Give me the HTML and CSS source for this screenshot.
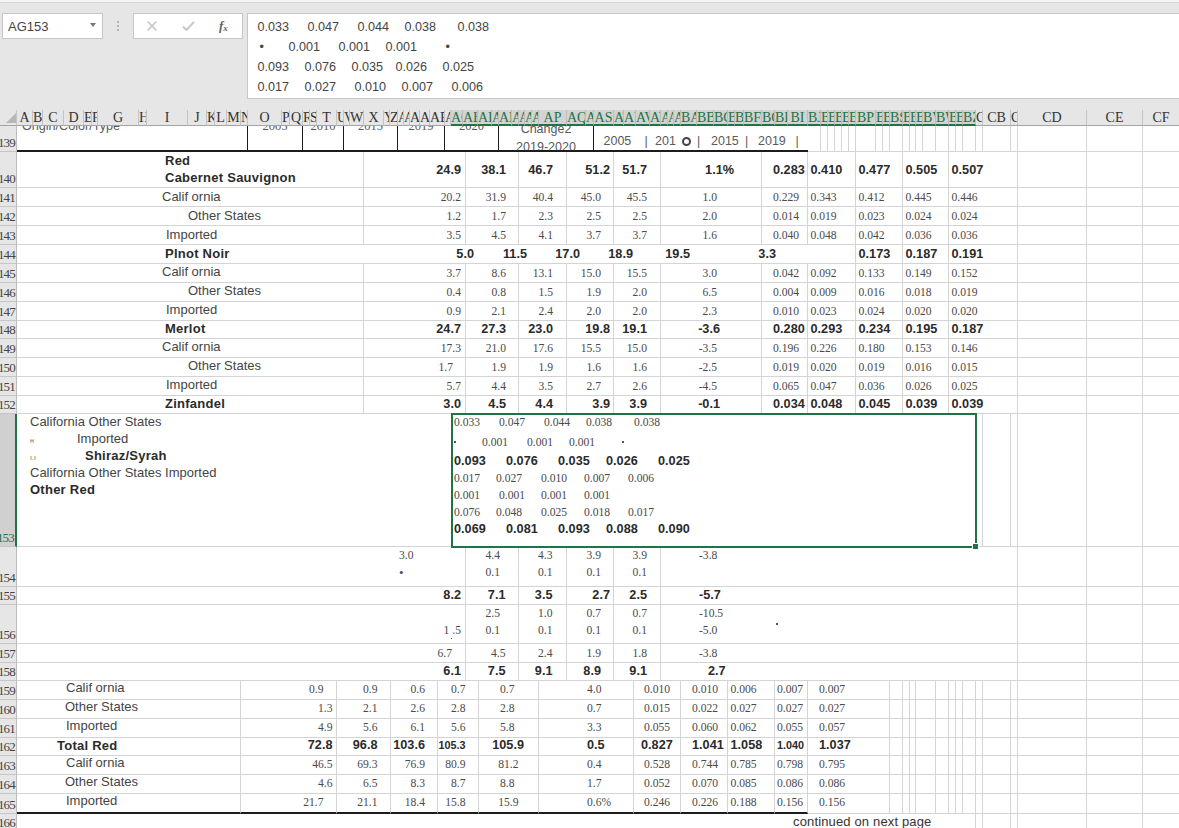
FILE: index.html
```html
<!DOCTYPE html>
<html lang="en">
<head>
<meta charset="utf-8">
<title>Sheet</title>
<link rel="stylesheet" href="styles.css">
</head>
<body>
<div class="app">
  <div class="topstrip"></div>
  <div class="fbar">
    <div class="namebox"><span>AG153</span><i class="caret"></i></div>
    <div class="grip"><i></i><i></i><i></i></div>
    <div class="btns">
      <svg class="ic-x" width="10" height="10" viewBox="0 0 10 10"><path d="M.7.7l8.6 8.6M9.3.7L.7 9.3" fill="none" stroke="#c9c9c9" stroke-width="1.7"/></svg>
      <svg class="ic-ok" width="13" height="10" viewBox="0 0 13 10"><path d="M1 5.5l3.5 3.5L12 .8" fill="none" stroke="#c9c9c9" stroke-width="2"/></svg>
      <span class="fx">f<sub>x</sub></span>
    </div>
    <div class="ftext">
      <div class="fl fl1"><span>0.033</span><span>0.047</span><span>0.044</span><span>0.038</span><span>0.038</span></div>
      <div class="fl fl2"><span>•</span><span>0.001</span><span>0.001</span><span>0.001</span><span>•</span></div>
      <div class="fl fl3"><span>0.093</span><span>0.076</span><span>0.035</span><span>0.026</span><span>0.025</span></div>
      <div class="fl fl4"><span>0.017</span><span>0.027</span><span>0.010</span><span>0.007</span><span>0.006</span></div>
    </div>
  </div>

  <div class="col-head">
    <div class="corner"><i></i></div>
    <div>A</div><div>B</div><div>C</div><div>D</div><div>E</div><div>F</div><div>G</div><div>H</div><div>I</div><div>J</div><div>K</div><div>L</div><div>M</div><div>N</div><div>O</div><div>P</div><div>Q</div><div>R</div><div>S</div><div>T</div><div>U</div><div>V</div><div>W</div><div>X</div><div>Y</div><div>Z</div>
    <div>AA</div><div>AB</div><div>AC</div><div>AD</div><div>AE</div><div>AF</div><div>AG</div><div>AH</div><div>AI</div><div>AJ</div><div>AK</div><div>AL</div><div>AM</div><div>AN</div><div>AO</div><div>AP</div><div>AQ</div><div>AR</div><div>AS</div><div>AT</div><div>AU</div><div>AV</div><div>AW</div><div>AX</div><div>AY</div><div>AZ</div>
    <div>BA</div><div>BB</div><div>BC</div><div>BD</div><div>BE</div><div>BF</div><div>BG</div><div>BH</div><div>BI</div><div>BJ</div><div>BK</div><div>BL</div><div>BM</div><div>BN</div><div>BO</div><div>BP</div><div>BQ</div><div>BR</div><div>BS</div><div>BT</div><div>BU</div><div>BV</div><div>BV</div><div>BW</div><div>BX</div><div>BY</div><div>BZ</div>
    <div>CA</div><div>CB</div><div>CC</div><div>CD</div><div>CE</div><div>CF</div>
  </div>

  <div class="row thead">
    <div class="rh">139</div>
    <div class="c hc hl"><span class="clip">Origin/Color/Type</span></div>
    <div class="c hc"><span class="clip s">2005</span></div>
    <div class="c hc"><span class="clip s">2010</span></div>
    <div class="c hc"><span class="clip s">2015</span></div>
    <div class="c hc"><span class="clip s">2019</span></div>
    <div class="c hc"><span class="clip s">2020</span></div>
    <div class="c hc chg"><span>Change2</span><span>2019-2020</span></div>
    <div class="c hb yrs"><span>2005</span><span>|</span><span>201</span><span><i class="ring"></i></span><span>|</span><span>2015</span><span>|</span><span>2019</span><span>|</span></div>
    <div class="c"></div><div class="c"></div><div class="c"></div><div class="c"></div><div class="c"></div>
    <div class="c"></div><div class="c"></div><div class="c"></div><div class="c"></div><div class="c"></div>
    <div class="c"></div><div class="c"></div><div class="c"></div><div class="c"></div><div class="c"></div>
    <div class="c"></div><div class="c"></div><div class="c"></div><div class="c"></div><div class="c"></div>
    <div class="c"></div><div class="c"></div><div class="c"></div><div class="c nr"></div>
  </div>

  <div class="row main bd h36"><div class="rh">140</div><div class="c tl two"><span>Red</span><span>Cabernet Sauvignon</span></div><div class="c">24.9</div><div class="c">38.1</div><div class="c">46.7</div><div class="c">51.2</div><div class="c">51.7</div><div class="c pct">1.1%</div><div class="c">0.283</div><div class="c">0.410</div><div class="c">0.477</div><div class="c">0.505</div><div class="c">0.507</div><div class="c"></div><div class="c"></div><div class="c nr"></div></div>
  <div class="row main h19"><div class="rh">141</div><div class="c tl ca">Calif ornia</div><div class="c">20.2</div><div class="c">31.9</div><div class="c">40.4</div><div class="c">45.0</div><div class="c">45.5</div><div class="c">1.0</div><div class="c">0.229</div><div class="c">0.343</div><div class="c">0.412</div><div class="c">0.445</div><div class="c">0.446</div><div class="c"></div><div class="c"></div><div class="c nr"></div></div>
  <div class="row main h19"><div class="rh">142</div><div class="c tl os">Other States</div><div class="c">1.2</div><div class="c">1.7</div><div class="c">2.3</div><div class="c">2.5</div><div class="c">2.5</div><div class="c">2.0</div><div class="c">0.014</div><div class="c">0.019</div><div class="c">0.023</div><div class="c">0.024</div><div class="c">0.024</div><div class="c"></div><div class="c"></div><div class="c nr"></div></div>
  <div class="row main h19"><div class="rh">143</div><div class="c tl im">Imported</div><div class="c">3.5</div><div class="c">4.5</div><div class="c">4.1</div><div class="c">3.7</div><div class="c">3.7</div><div class="c">1.6</div><div class="c">0.040</div><div class="c">0.048</div><div class="c">0.042</div><div class="c">0.036</div><div class="c">0.036</div><div class="c"></div><div class="c"></div><div class="c nr"></div></div>
  <div class="row pinot bd h19"><div class="rh">144</div><div class="c nb tl0"><span class="pn">Plnot Noir</span><span>5.0</span></div><div class="c nb">11.5</div><div class="c nb">17.0</div><div class="c nb">18.9</div><div class="c nb">19.5</div><div class="c nb">3.3</div><div class="c"></div><div class="c">0.173</div><div class="c">0.187</div><div class="c">0.191</div><div class="c"></div><div class="c"></div><div class="c nr"></div></div>
  <div class="row main h19"><div class="rh">145</div><div class="c tl ca">Calif ornia</div><div class="c">3.7</div><div class="c">8.6</div><div class="c">13.1</div><div class="c">15.0</div><div class="c">15.5</div><div class="c">3.0</div><div class="c">0.042</div><div class="c">0.092</div><div class="c">0.133</div><div class="c">0.149</div><div class="c">0.152</div><div class="c"></div><div class="c"></div><div class="c nr"></div></div>
  <div class="row main h19"><div class="rh">146</div><div class="c tl os">Other States</div><div class="c">0.4</div><div class="c">0.8</div><div class="c">1.5</div><div class="c">1.9</div><div class="c">2.0</div><div class="c">6.5</div><div class="c">0.004</div><div class="c">0.009</div><div class="c">0.016</div><div class="c">0.018</div><div class="c">0.019</div><div class="c"></div><div class="c"></div><div class="c nr"></div></div>
  <div class="row main h19"><div class="rh">147</div><div class="c tl im">Imported</div><div class="c">0.9</div><div class="c">2.1</div><div class="c">2.4</div><div class="c">2.0</div><div class="c">2.0</div><div class="c">2.3</div><div class="c">0.010</div><div class="c">0.023</div><div class="c">0.024</div><div class="c">0.020</div><div class="c">0.020</div><div class="c"></div><div class="c"></div><div class="c nr"></div></div>
  <div class="row main bd h18"><div class="rh">148</div><div class="c tl bl">Merlot</div><div class="c">24.7</div><div class="c">27.3</div><div class="c">23.0</div><div class="c">19.8</div><div class="c">19.1</div><div class="c">-3.6</div><div class="c">0.280</div><div class="c">0.293</div><div class="c">0.234</div><div class="c">0.195</div><div class="c">0.187</div><div class="c"></div><div class="c"></div><div class="c nr"></div></div>
  <div class="row main h19"><div class="rh">149</div><div class="c tl ca">Calif ornia</div><div class="c">17.3</div><div class="c">21.0</div><div class="c">17.6</div><div class="c">15.5</div><div class="c">15.0</div><div class="c">-3.5</div><div class="c">0.196</div><div class="c">0.226</div><div class="c">0.180</div><div class="c">0.153</div><div class="c">0.146</div><div class="c"></div><div class="c"></div><div class="c nr"></div></div>
  <div class="row main h19"><div class="rh">150</div><div class="c tl os">Other States</div><div class="c in">1.7</div><div class="c">1.9</div><div class="c">1.9</div><div class="c">1.6</div><div class="c">1.6</div><div class="c">-2.5</div><div class="c">0.019</div><div class="c">0.020</div><div class="c">0.019</div><div class="c">0.016</div><div class="c">0.015</div><div class="c"></div><div class="c"></div><div class="c nr"></div></div>
  <div class="row main h19"><div class="rh">151</div><div class="c tl im">Imported</div><div class="c">5.7</div><div class="c">4.4</div><div class="c">3.5</div><div class="c">2.7</div><div class="c">2.6</div><div class="c">-4.5</div><div class="c">0.065</div><div class="c">0.047</div><div class="c">0.036</div><div class="c">0.026</div><div class="c">0.025</div><div class="c"></div><div class="c"></div><div class="c nr"></div></div>
  <div class="row main bd h18"><div class="rh">152</div><div class="c tl bl">Zinfandel</div><div class="c">3.0</div><div class="c">4.5</div><div class="c">4.4</div><div class="c">3.9</div><div class="c">3.9</div><div class="c">-0.1</div><div class="c">0.034</div><div class="c">0.048</div><div class="c">0.045</div><div class="c">0.039</div><div class="c">0.039</div><div class="c"></div><div class="c"></div><div class="c nr"></div></div>

  <div class="row active h133">
    <div class="rh on">153</div>
    <div class="c note">
      <span>California Other States</span>
      <span><small class="mk m1">н</small>Imported</span>
      <span class="b"><small class="mk m2">ı.ı</small>Shiraz/Syrah</span>
      <span>California Other States Imported</span>
      <span class="b">Other Red</span>
    </div>
    <div class="c selcell">
      <div class="sl sl1"><span>0.033</span><span>0.047</span><span>0.044</span><span>0.038</span><span>0.038</span></div>
      <div class="sl sl2"><i class="tick up"></i><span>0.001</span><span>0.001</span><span>0.001</span><i class="tick up"></i></div>
      <div class="sl sl3 b"><span>0.093</span><span>0.076</span><span>0.035</span><span>0.026</span><span>0.025</span></div>
      <div class="sl sl4"><span>0.017</span><span>0.027</span><span>0.010</span><span>0.007</span><span>0.006</span></div>
      <div class="sl sl5"><span>0.001</span><span>0.001</span><span>0.001</span><span>0.001</span></div>
      <div class="sl sl4"><span>0.076</span><span>0.048</span><span>0.025</span><span>0.018</span><span>0.017</span></div>
      <div class="sl sl3 b"><span>0.069</span><span>0.081</span><span>0.093</span><span>0.088</span><span>0.090</span></div>
      <div class="frame"><i class="handle"></i></div>
    </div>
    <div class="c"></div><div class="c"></div><div class="c"></div><div class="c"></div><div class="c"></div><div class="c nr"></div>
  </div>

  <div class="row low h40"><div class="rh">154</div><div class="c st far"><span>3.0</span><span class="pt">•</span></div><div class="c st in2"><span>4.4</span><span>0.1</span></div><div class="c st"><span>4.3</span><span>0.1</span></div><div class="c st"><span>3.9</span><span>0.1</span></div><div class="c st"><span>3.9</span><span>0.1</span></div><div class="c wide st"><span>-3.8</span></div><div class="c"></div><div class="c"></div><div class="c nr"></div></div>
  <div class="row low bd h18"><div class="rh">155</div><div class="c">8.2</div><div class="c">7.1</div><div class="c">3.5</div><div class="c tight">2.7</div><div class="c">2.5</div><div class="c wide">-5.7</div><div class="c"></div><div class="c"></div><div class="c nr"></div></div>
  <div class="row low h39"><div class="rh">156</div><div class="c st"><span>&nbsp;</span><span class="under">1 .5</span></div><div class="c st in2"><span>2.5</span><span>0.1</span></div><div class="c st"><span>1.0</span><span>0.1</span></div><div class="c st"><span>0.7</span><span>0.1</span></div><div class="c st"><span>0.7</span><span>0.1</span></div><div class="c wide"><div class="st2"><span>-10.5</span><span>-5.0</span></div><i class="tick rightdot"></i></div><div class="c"></div><div class="c"></div><div class="c nr"></div></div>
  <div class="row low h19"><div class="rh">157</div><div class="c in">6.7</div><div class="c">4.5</div><div class="c">2.4</div><div class="c">1.9</div><div class="c">1.8</div><div class="c wide">-3.8</div><div class="c"></div><div class="c"></div><div class="c nr"></div></div>
  <div class="row low bd h18"><div class="rh">158</div><div class="c">6.1</div><div class="c">7.5</div><div class="c">9.1</div><div class="c">8.9</div><div class="c">9.1</div><div class="c wide in3">2.7</div><div class="c"></div><div class="c"></div><div class="c nr"></div></div>

  <div class="row tot h19"><div class="rh">159</div><div class="c tl ca2">Calif ornia</div><div class="c in">0.9</div><div class="c">0.9</div><div class="c">0.6</div><div class="c">0.7</div><div class="c">0.7</div><div class="c">4.0</div><div class="c">0.010</div><div class="c">0.010</div><div class="c">0.006</div><div class="c">0.007</div><div class="c">0.007</div>
    <div class="c"></div><div class="c"></div><div class="c"></div><div class="c"></div><div class="c"></div><div class="c"></div><div class="c"></div><div class="c"></div><div class="c"></div><div class="c"></div><div class="c"></div><div class="c"></div><div class="c"></div><div class="c nr"></div></div>
  <div class="row tot h19"><div class="rh">160</div><div class="c tl os2">Other States</div><div class="c">1.3</div><div class="c">2.1</div><div class="c">2.6</div><div class="c">2.8</div><div class="c">2.8</div><div class="c">0.7</div><div class="c">0.015</div><div class="c">0.022</div><div class="c">0.027</div><div class="c">0.027</div><div class="c">0.027</div>
    <div class="c"></div><div class="c"></div><div class="c"></div><div class="c"></div><div class="c"></div><div class="c"></div><div class="c"></div><div class="c"></div><div class="c"></div><div class="c"></div><div class="c"></div><div class="c"></div><div class="c"></div><div class="c nr"></div></div>
  <div class="row tot h19"><div class="rh">161</div><div class="c tl ca2">Imported</div><div class="c">4.9</div><div class="c">5.6</div><div class="c">6.1</div><div class="c">5.6</div><div class="c">5.8</div><div class="c">3.3</div><div class="c">0.055</div><div class="c">0.060</div><div class="c">0.062</div><div class="c">0.055</div><div class="c">0.057</div>
    <div class="c"></div><div class="c"></div><div class="c"></div><div class="c"></div><div class="c"></div><div class="c"></div><div class="c"></div><div class="c"></div><div class="c"></div><div class="c"></div><div class="c"></div><div class="c"></div><div class="c"></div><div class="c nr"></div></div>
  <div class="row tot bd h18"><div class="rh">162</div><div class="c tl tr">Total Red</div><div class="c">72.8</div><div class="c">96.8</div><div class="c">103.6</div><div class="c sm">105.3</div><div class="c v5">105.9</div><div class="c">0.5</div><div class="c v7">0.827</div><div class="c">1.041</div><div class="c">1.058</div><div class="c sm">1.040</div><div class="c">1.037</div>
    <div class="c"></div><div class="c"></div><div class="c"></div><div class="c"></div><div class="c"></div><div class="c"></div><div class="c"></div><div class="c"></div><div class="c"></div><div class="c"></div><div class="c"></div><div class="c"></div><div class="c"></div><div class="c nr"></div></div>
  <div class="row tot h19"><div class="rh">163</div><div class="c tl ca2">Calif ornia</div><div class="c">46.5</div><div class="c">69.3</div><div class="c">76.9</div><div class="c">80.9</div><div class="c v6">81.2</div><div class="c">0.4</div><div class="c">0.528</div><div class="c">0.744</div><div class="c">0.785</div><div class="c">0.798</div><div class="c">0.795</div>
    <div class="c"></div><div class="c"></div><div class="c"></div><div class="c"></div><div class="c"></div><div class="c"></div><div class="c"></div><div class="c"></div><div class="c"></div><div class="c"></div><div class="c"></div><div class="c"></div><div class="c"></div><div class="c nr"></div></div>
  <div class="row tot h19"><div class="rh">164</div><div class="c tl os2">Other States</div><div class="c">4.6</div><div class="c">6.5</div><div class="c">8.3</div><div class="c">8.7</div><div class="c">8.8</div><div class="c">1.7</div><div class="c">0.052</div><div class="c">0.070</div><div class="c">0.085</div><div class="c">0.086</div><div class="c">0.086</div>
    <div class="c"></div><div class="c"></div><div class="c"></div><div class="c"></div><div class="c"></div><div class="c"></div><div class="c"></div><div class="c"></div><div class="c"></div><div class="c"></div><div class="c"></div><div class="c"></div><div class="c"></div><div class="c nr"></div></div>
  <div class="row tot end h20"><div class="rh">165</div><div class="c tl ca2">Imported</div><div class="c in">21.7</div><div class="c">21.1</div><div class="c">18.4</div><div class="c">15.8</div><div class="c v6">15.9</div><div class="c">0.6%</div><div class="c">0.246</div><div class="c">0.226</div><div class="c">0.188</div><div class="c">0.156</div><div class="c">0.156</div>
    <div class="c"></div><div class="c"></div><div class="c"></div><div class="c"></div><div class="c"></div><div class="c"></div><div class="c"></div><div class="c"></div><div class="c"></div><div class="c"></div><div class="c"></div><div class="c"></div><div class="c"></div><div class="c nr"></div></div>
  <div class="row foot h18"><div class="rh">166</div><div class="c tl cont">continued on next page</div><div class="c"></div><div class="c"></div><div class="c"></div><div class="c"></div><div class="c"></div><div class="c nr"></div></div>
</div>
</body>
</html>
```

FILE: styles.css
```css
* { box-sizing: border-box; }
html, body { margin: 0; padding: 0; }
body { width: 1179px; height: 828px; overflow: hidden; background: #e6e6e6; }
.app { width: 1179px; height: 828px; overflow: hidden; display: flex; flex-direction: column; font-family: "Liberation Sans", Arial, sans-serif; color: #444; }

/* ---------- formula bar ---------- */
.topstrip { height: 3px; flex: none; background: #f4f4f4; border-bottom: 1px solid #d6d6d6; }
.fbar { flex: none; height: 107px; display: flex; align-items: flex-start; padding: 10px 0 0 2px; }
.namebox { width: 101px; height: 26px; flex: none; background: #fff; border: 1px solid #c6c6c6; display: flex; align-items: center; justify-content: space-between; padding: 0 6px 0 5px; font-size: 13px; color: #444; }
.caret { width: 0; height: 0; border-left: 3.5px solid transparent; border-right: 3.5px solid transparent; border-top: 4px solid #777; margin-top: -2px; }
.grip { width: 30px; height: 26px; flex: none; display: flex; flex-direction: column; align-items: center; justify-content: center; gap: 2px; }
.grip i { width: 2px; height: 2px; background: #b4b4b4; }
.btns { width: 110px; height: 26px; flex: none; background: #fff; border: 1px solid #c6c6c6; display: flex; align-items: center; padding-left: 13px; }
.ic-ok { margin-left: 25px; }
.fx { margin-left: 24px; font: italic 700 13px "Liberation Serif", serif; color: #666; line-height: 1; }
.fx sub { font-size: 9px; vertical-align: -1px; }
.ftext { flex: 1; height: 86px; margin-left: 3.5px; background: #fff; border: 1px solid #c6c6c6; border-right: 0; padding: 3px 0 0 10px; font-size: 12.6px; color: #444; }
.fl { display: grid; height: 20px; align-items: center; }
.fl1 { grid-template-columns: 50px 50px 47px 53px auto; }
.fl2 { grid-template-columns: 31px 50px 47px 60px auto; }
.fl2 > :first-child { padding-left: 2px; }
.fl3 { grid-template-columns: 47px 47px 44px 47px auto; }
.fl4 { grid-template-columns: 47px 50px 47px 50px auto; }

/* ---------- column letters ---------- */
.col-head {
  flex: none; height: 16px; display: grid;
  grid-template-columns:
    17px 16px 10px 21px 20px 8px 6px 41px 8px 41px 19px 8px 12px 14px 7px 34px 8px 13px 7px 7px 20px 7px 6px 14px 20px 6px 8px
    6px 6px 10px 10px 15px 6px
    12px 15px 14px 7px 13px 7px 6px 7px 7px 28px 19px 8px 20px 10px 12px 14px 11px 7px 6px 7px
    16px 17px 14px 7px 9px 18px 13px 13px 20px 13px 7px 7px 7px 7px 7px 20px 7px 7px 13px 7px 6px 7px 13px 13px 7px 7px 13px
    7px 28px 7px 69px 56px 36px;
  font: 14px/15px "Liberation Serif", serif; color: #333;
}
.col-head > div { display: flex; justify-content: safe center; overflow: hidden; white-space: nowrap; border-right: 1px solid #c4c4c4; border-bottom: 1px solid #a4a4a4; }
.col-head > div:nth-child(n+34):nth-child(-n+80) { background: #d3d3d3; color: #217346; border-bottom: 2px solid #217346; border-right-color: #bdbdbd; }
.col-head > div:last-child { border-right: 0; }
.corner { position: relative; }
.corner i { width: 10px; height: 10px; margin: 3px 0 0 6px; background: #b6b6b6; clip-path: polygon(100% 0, 100% 100%, 0 100%); }

/* ---------- rows ---------- */
.row { flex: none; display: grid; grid-template-rows: minmax(0, 1fr); background: #fff; }
.h18 { height: 18px; } .h19 { height: 19px; } .h20 { height: 20px; } .h36 { height: 36px; }
.h39 { height: 39px; } .h40 { height: 40px; } .h133 { height: 133px; }
.rh { display: flex; align-items: flex-end; justify-content: flex-end; overflow: hidden; background: #e6e6e6; border-right: 1px solid #bcbcbc; border-bottom: 1px solid #c6c6c6; font: 13px/14px "Liberation Serif", serif; letter-spacing: -.8px; color: #444; padding: 0 1px 1px 0; white-space: nowrap; }
.rh.on { background: #d0d0d0; color: #217346; border-right: 2px solid #217346; }
.c { min-width: 0; display: flex; align-items: center; justify-content: flex-end; white-space: nowrap; border-right: 1px solid #d4d4d4; border-bottom: 1px solid #d4d4d4; font: 11.6px/17px "Liberation Serif", serif; color: #4a4a4a; }
.c.nr { border-right: 0; }
.c.nb { border-right: 0; }
.bd .c, .b { font: 700 12.7px/17px "Liberation Sans", sans-serif; color: #2b2b2b; }
.tl { justify-content: flex-start; padding-bottom: 2px; font: 13px/17px "Liberation Sans", sans-serif; color: #444; }
.bd .tl { font: 700 13px/17px "Liberation Sans", sans-serif; letter-spacing: .25px; color: #2b2b2b; }
.ca { padding-left: 145px; }
.os { padding-left: 171px; }
.im { padding-left: 149px; }
.bl { padding-left: 148px; }
.two { flex-direction: column; align-items: flex-start; justify-content: center; padding: 0 0 2px 148px; }
.pinot ~ .main.h19 .tl { padding-bottom: 4px; }

/* row 139 */
.thead { height: 26px; grid-template-columns: 17px 231px 55px 41px 54px 47px 54px 95px 214px 13px 7px 7px 7px 7px 7px 20px 7px 7px 13px 7px 6px 7px 13px 13px 7px 7px 13px 7px 28px 7px 69px 56px 36px; }
.hc { overflow: hidden; align-items: flex-start; justify-content: center; border-right: 1px solid #1c1c1c; border-bottom: 2px solid #1c1c1c; font: 12.5px/17px "Liberation Sans", sans-serif; color: #5a5a5a; }
.hc.hl { justify-content: flex-start; padding-left: 5px; font-size: 12.6px; }
.clip { margin-top: -8px; }
.clip.s { font: 12.6px/17px "Liberation Serif", serif; }
.chg { flex-direction: column; align-items: center; justify-content: flex-start; line-height: 17.5px; }
.chg > :first-child { margin-top: -5px; }
.hb { border-right: 0; border-bottom: 2px solid #1c1c1c; }
.yrs { display: grid; grid-template-columns: 41px 10.5px 26px 16px 14px 34px 13px 37.5px auto; justify-content: start; align-items: center; padding: 7px 0 0 9.5px; font: 12.5px/17px "Liberation Sans", sans-serif; color: #5a5a5a; }
.yrs > span:nth-child(4) { display: flex; align-items: center; padding-left: 1px; }
.ring { display: block; width: 9px; height: 9px; border: 2px solid #444; border-radius: 50%; }

/* main table */
.main { grid-template-columns: 17px 347px 102px 53px 48px 47px 47px 101px 46px 48px 47px 46px 69px 69px 56px 36px; }
.main > :nth-child(3) { padding-right: 4px; }
.main > :nth-child(3).in { padding-right: 12px; }
.main > :nth-child(4) { padding-right: 12px; }
.main > :nth-child(5) { padding-right: 13px; }
.main > :nth-child(6) { padding-right: 12px; }
.main > :nth-child(7) { padding-right: 13px; }
.main > :nth-child(8) { padding-right: 44px; }
.main.bd > :nth-child(6) { padding-right: 3px; }
.main.bd > :nth-child(8) { padding-right: 41px; }
.main.bd > :nth-child(8).pct { padding-right: 27px; }
.main > :nth-child(n+9):nth-child(-n+13) { justify-content: flex-start; padding-left: 2.5px; }
.main > :nth-child(9):nth-child(n+9) { padding-left: 11px; }
.main.h36 > :nth-child(n+3) { padding-top: 2px; }

/* row 144 */
.pinot { grid-template-columns: 17px 457px 53px 53px 53px 57px 86px 80px 47px 46px 69px 69px 56px 36px; }
.tl0 { justify-content: space-between; padding-left: 148px; }
.pn { font-size: 13px; letter-spacing: .25px; margin-bottom: 2px; }
.pinot > :nth-child(n+9):nth-child(-n+11) { justify-content: flex-start; padding-left: 2.5px; }
.pinot > :nth-child(8) { border-right: 1px solid #d4d4d4; }

/* row 153 */
.active { grid-template-columns: 17px 434px 526px 6px 28px 7px 69px 56px 36px; }
.note { display: flex; flex-direction: column; align-items: flex-start; justify-content: flex-start; padding-left: 13px; font: 13px/17px "Liberation Sans", sans-serif; color: #444; border-right: 0; }
.note > span { display: flex; align-items: center; height: 17px; }
.note > span:first-child { margin-top: -1px; }
.note .b { letter-spacing: .25px; font-size: 13px; }
.mk { display: block; font: 7px/9px "Liberation Sans", sans-serif; color: #666; margin-top: 4px; letter-spacing: 0; }
.m1 { width: 47px; }
.m2 { width: 55px; }
.selcell { position: relative; display: grid; grid-template-rows: 17px 22px 17px 17px 17px 17px 17px; align-content: start; justify-content: stretch; padding-left: 3px; border-right: 0; }
.sl { display: grid; align-items: center; }
.sl1 { grid-template-columns: 45px 45px 42px 48px auto; }
.sl2 { grid-template-columns: 28px 45px 42px 53px auto; align-items: end; }
.sl3 { grid-template-columns: 52px 52px 48px 52px auto; }
.sl4 { grid-template-columns: 42px 45px 43px 44px auto; }
.sl5 { grid-template-columns: 45px 42px 43px auto; }
.tick { display: block; width: 2px; height: 2px; background: #555; }
.tick.up { align-self: start; margin-top: 7px; }
.frame { position: absolute; left: 0; top: -1px; right: 0; bottom: -2px; border: 2px solid #217346; }
.handle { position: absolute; right: -4px; bottom: -4px; width: 7px; height: 7px; background: #217346; border: 1px solid #fff; }

/* rows 154 - 158 */
.low { grid-template-columns: 17px 449px 53px 48px 47px 47px 357px 69px 56px 36px; }
.low > :nth-child(2) { padding-right: 4px; }
.low > :nth-child(2).in { padding-right: 13px; }
.low > :nth-child(3) { padding-right: 12.5px; }
.low > :nth-child(3).in2 { padding-right: 18px; }
.low > :nth-child(4) { padding-right: 13.5px; }
.low > :nth-child(5) { padding-right: 12px; }
.low > :nth-child(5).tight { padding-right: 3px; }
.low > :nth-child(6) { padding-right: 13px; }
.low > .wide { justify-content: flex-start; padding-left: 38px; }
.low > .wide.in3 { padding-left: 47px; }
.st { flex-direction: column; align-items: flex-end; justify-content: flex-start; }
.st2 { display: flex; flex-direction: column; align-self: flex-start; }
.low > .far { align-items: flex-start; padding: 0 0 0 382px; }
.pt { font-size: 13px; }
.wide.st { align-items: flex-start; }
.under { position: relative; }
.under::after { content: ""; position: absolute; left: 7px; bottom: 0; width: 1.5px; height: 1.5px; background: #555; }
.rightdot { margin-left: 53px; }

/* rows 159 - 165 */
.tot { grid-template-columns: 17px 224px 96px 54px 47px 41px 60px 95px 47px 47px 47px 33px 82px 13px 7px 6px 20px 13px 7px 7px 13px 7px 28px 7px 69px 56px 36px; }
.tot .c { padding-bottom: 2px; }
.tot .tl { padding-bottom: 5px; }
.tot.bd .tl { padding-bottom: 3px; }
.ca2 { padding-left: 49px; }
.os2 { padding-left: 48px; }
.tr { padding-left: 40px; }
.tot > :nth-child(3) { padding-right: 3.5px; }
.tot > :nth-child(3).in { padding-right: 12.5px; }
.tot > :nth-child(4) { padding-right: 12.5px; }
.tot > :nth-child(5) { padding-right: 12px; }
.tot > :nth-child(6) { padding-right: 12.5px; }
.tot > :nth-child(7) { padding-right: 23.5px; }
.tot > :nth-child(7).v6 { padding-right: 19.5px; }
.tot > :nth-child(7).v5 { padding-right: 14px; }
.tot > :nth-child(n+8):nth-child(-n+13) { justify-content: flex-start; }
.tot > :nth-child(8) { padding-left: 48px; }
.tot > :nth-child(9) { padding-left: 10px; }
.tot > :nth-child(9).v7 { padding-left: 7px; }
.tot > :nth-child(10) { padding-left: 11px; }
.tot > :nth-child(11) { padding-left: 2.5px; }
.tot > :nth-child(12) { padding-left: 2px; }
.tot > :nth-child(13) { padding-left: 11px; }
.bd .sm { font-size: 10.8px; }
.end > :nth-child(n+2):nth-child(-n+12) { border-bottom: 2px solid #1c1c1c; }

/* row 166 */
.foot { grid-template-columns: 17px 959px 7px 28px 7px 69px 56px 36px; }
.cont { padding-left: 776px; font-size: 13px; color: #333; letter-spacing: .15px; }
```
